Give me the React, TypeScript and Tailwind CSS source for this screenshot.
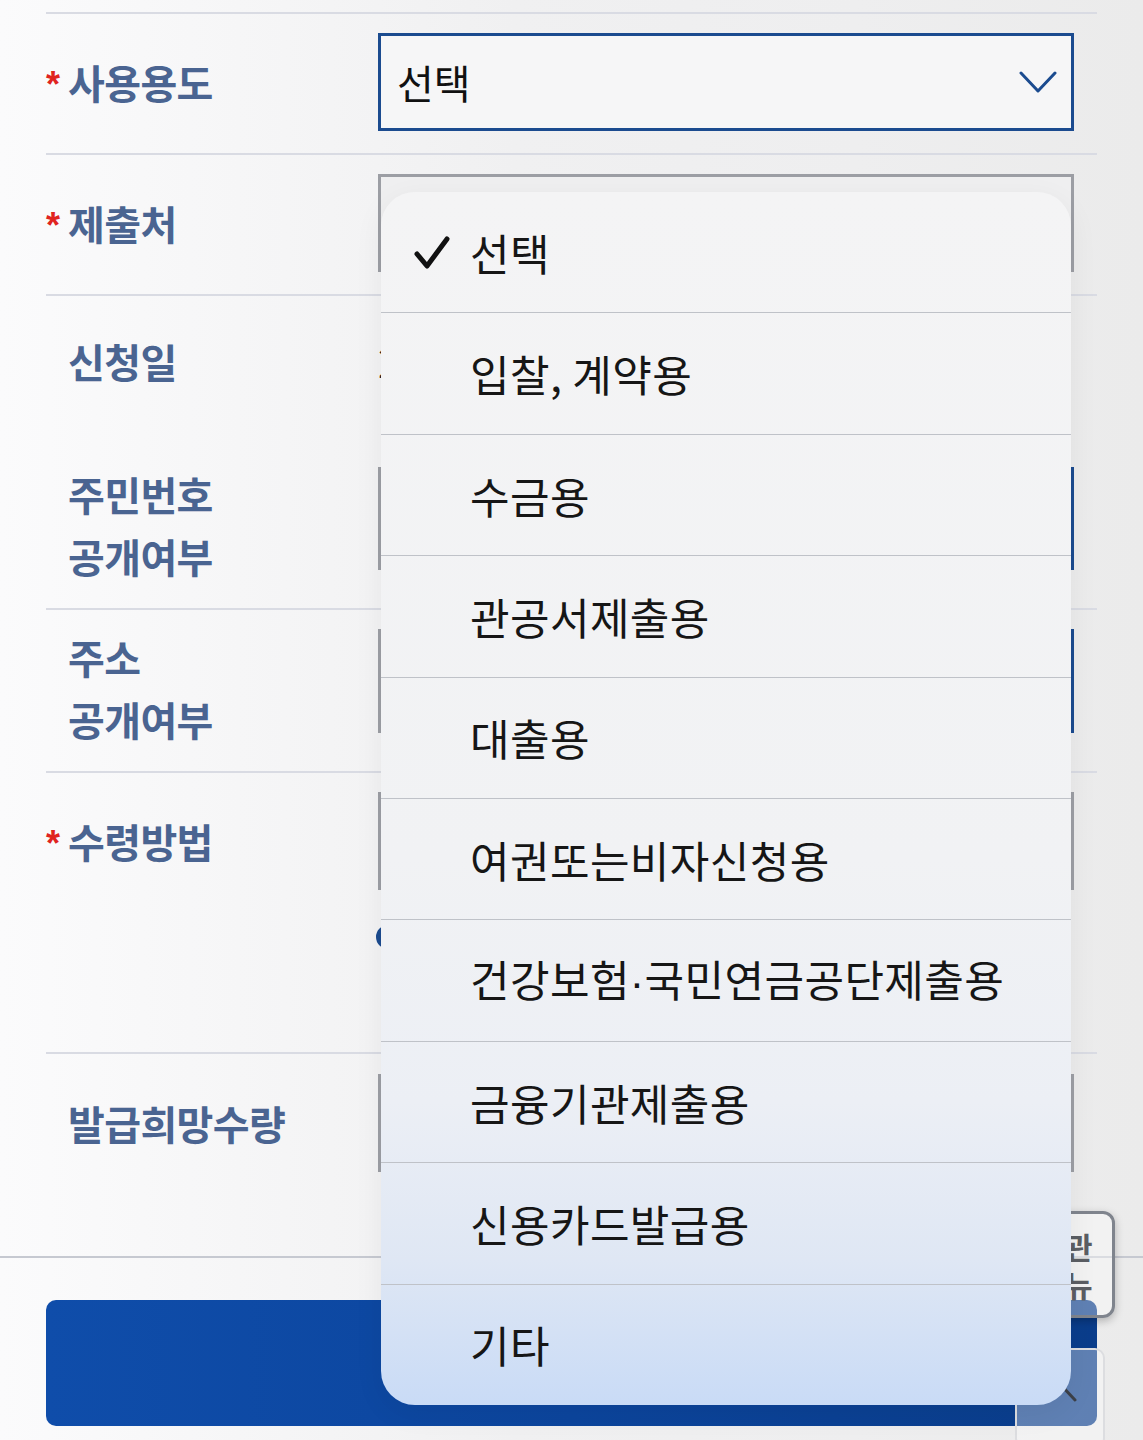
import React from "react";

const labelCls =
  "font-['Noto_Sans_CJK_KR',sans-serif] text-[40px] font-bold tracking-[-0.6px] text-[#4a6491] leading-[62px]";

function Star() {
  return (
    <span className="font-['Liberation_Sans',sans-serif] text-[36px] font-bold text-[#e0241f] w-[22px] inline-block relative top-[3px] leading-none">
      *
    </span>
  );
}

function Label({ text, required, h = "h-[98px]" }: { text: string; required?: boolean; h?: string }) {
  return (
    <div className={`w-[332px] ${h} flex items-center shrink-0`}>
      {required ? <Star /> : <span className="w-[22px] inline-block" />}
      <span className={labelCls}>{text}</span>
    </div>
  );
}

function TwoLineLabel({ a, b, offset }: { a: string; b: string; offset: string }) {
  return (
    <div className={`w-[332px] h-[103px] shrink-0 pl-[22px] flex flex-col justify-center ${offset}`}>
      <span className={labelCls}>{a}</span>
      <span className={labelCls}>{b}</span>
    </div>
  );
}

function Chevron() {
  return (
    <svg width="38" height="24" viewBox="0 0 38 24" fill="none">
      <polyline
        points="2,3 19,21 36,3"
        stroke="#1b4b8f"
        strokeWidth="3"
        strokeLinecap="round"
        strokeLinejoin="round"
      />
    </svg>
  );
}

function Check() {
  return (
    <svg width="38" height="38" viewBox="0 0 38 38" fill="none">
      <path
        d="M4 21 L14 33 L34 6"
        stroke="#111"
        strokeWidth="5"
        strokeLinecap="round"
        strokeLinejoin="round"
      />
    </svg>
  );
}

const items = [
  "선택",
  "입찰, 계약용",
  "수금용",
  "관공서제출용",
  "대출용",
  "여권또는비자신청용",
  "건강보험·국민연금공단제출용",
  "금융기관제출용",
  "신용카드발급용",
  "기타",
];

function ItemText({ t }: { t: string }) {
  if (t.includes("·")) {
    const [a, b] = t.split("·");
    return (
      <>
        {a}
        <span className="font-['Liberation_Sans',sans-serif]">·</span>
        {b}
      </>
    );
  }
  return <>{t}</>;
}

export default function App() {
  const kr = "font-['Noto_Sans_CJK_KR',sans-serif]";
  return (
    <div
      className={`relative w-[1143px] h-[1440px] overflow-hidden bg-[linear-gradient(90deg,#fbfbfc_0%,#f5f5f6_25%,#f0f0f1_45%,#eeeeef_75%,#ebebeb_100%)] ${kr}`}
    >
      {/* form */}
      <div className="pt-[12px] px-[46px]">
        {/* row 1 */}
        <div className="flex items-start h-[143px] border-t-2 border-b-2 border-[#d9dbe3] pt-[19px]">
          <Label text="사용용도" required />
          <div className="w-[696px] h-[98px] border-[3px] border-[#1b4b8f] bg-[#f6f6f7] flex items-center justify-between pl-[16px] pr-[14px]">
            <span className="text-[40px] text-[#111] leading-none">선택</span>
            <Chevron />
          </div>
        </div>
        {/* row 2 */}
        <div className="flex items-start h-[141px] border-b-2 border-[#d9dbe3] pt-[19px]">
          <Label text="제출처" required />
          <div className="w-[696px] h-[98px] border-[3px] border-[#9c9ea4] bg-[#efeff0]" />
        </div>
        {/* row 3 */}
        <div className="flex items-start h-[152px] pt-[19px]">
          <Label text="신청일" h="h-[92px]" />
          <div className="w-[696px] h-[92px] flex items-center">
            <span className="text-[40px] text-[#222] leading-none">2</span>
          </div>
        </div>
        {/* row 4 */}
        <div className="flex items-start h-[162px] border-b-2 border-[#d9dbe3] pt-[19px]">
          <TwoLineLabel a="주민번호" b="공개여부" offset="mt-[6px]" />
          <div className="w-[696px] h-[103px] grid grid-cols-2">
            <div className="border-[3px] border-[#9c9ea4]" />
            <div className="border-[3px] border-[#1b4b8f]" />
          </div>
        </div>
        {/* row 5 */}
        <div className="flex items-start h-[163px] border-b-2 border-[#d9dbe3] pt-[19px]">
          <TwoLineLabel a="주소" b="공개여부" offset="mt-[7px]" />
          <div className="w-[696px] h-[104px] grid grid-cols-2">
            <div className="border-[3px] border-[#9c9ea4]" />
            <div className="border-[3px] border-[#1b4b8f]" />
          </div>
        </div>
        {/* row 6 */}
        <div className="flex items-start h-[281px] border-b-2 border-[#d9dbe3] pt-[19px]">
          <Label text="수령방법" required />
          <div className="w-[696px] flex flex-col">
            <div className="h-[98px] border-[3px] border-[#9c9ea4]" />
            <div className="mt-[22px] h-[50px] flex items-center ml-[-2px]">
              <span className="w-[24px] h-[24px] rounded-full border-[7px] border-[#1b4b8f] bg-white" />
            </div>
          </div>
        </div>
        {/* row 7 */}
        <div className="flex items-start h-[202px] pt-[20px]">
          <Label text="발급희망수량" />
          <div className="w-[696px] h-[98px] border-[3px] border-[#9c9ea4]" />
        </div>
      </div>

      {/* full-width divider */}
      <div className="h-[2px] bg-[#c6c9d1]" />

      {/* submit button */}
      <div className="px-[46px] pt-[42px]">
        <div className="h-[126px] rounded-[10px] bg-[linear-gradient(90deg,#0f4daa_0%,#0c459d_50%,#0a3d8b_100%)]" />
      </div>

      {/* floating side buttons */}
      <div className="absolute left-[1015px] top-[1211px] w-[100px] h-[107px] rounded-[12px] border-[3px] border-[#7f848d] bg-white/35 shadow-[0_3px_8px_rgba(0,0,0,0.25)] flex flex-col items-center justify-center leading-[38px]">
        <span className="text-[30px] font-bold text-[#5b5e63] tracking-[1px]">기관</span>
        <span className="text-[30px] font-bold text-[#5b5e63] tracking-[1px]">메뉴</span>
      </div>
      <div className="absolute left-[1015px] top-[1348px] w-[90px] h-[100px] rounded-[10px] border-2 border-[#dcdde0] bg-white/35 flex items-start justify-center pt-[30px]">
        <svg width="36" height="22" viewBox="0 0 36 22" fill="none">
          <polyline points="3,20 18,4 33,20" stroke="#3c4048" strokeWidth="3" strokeLinecap="round" strokeLinejoin="round" />
        </svg>
      </div>

      {/* dropdown menu */}
      <div className="absolute left-[381px] top-[192px] w-[690px] h-[1213px] rounded-[34px] overflow-hidden bg-[linear-gradient(180deg,#f4f4f5_0%,#f1f2f4_55%,#eceff5_75%,#dfe7f4_88%,#c9dbf6_100%)] shadow-[0_8px_30px_rgba(0,0,0,0.06)] flex flex-col">
        {items.map((t, i) => (
          <div
            key={t}
            className={`relative flex-1 flex items-center pl-[89px] ${i > 0 ? "border-t border-[#bfc2c8]" : ""}`}
          >
            {i === 0 && (
              <span className="absolute left-[32px] top-[41px]">
                <Check />
              </span>
            )}
            <span className="text-[43px] text-[#161616] leading-none tracking-[0.4px]">
              <ItemText t={t} />
            </span>
          </div>
        ))}
      </div>
    </div>
  );
}
